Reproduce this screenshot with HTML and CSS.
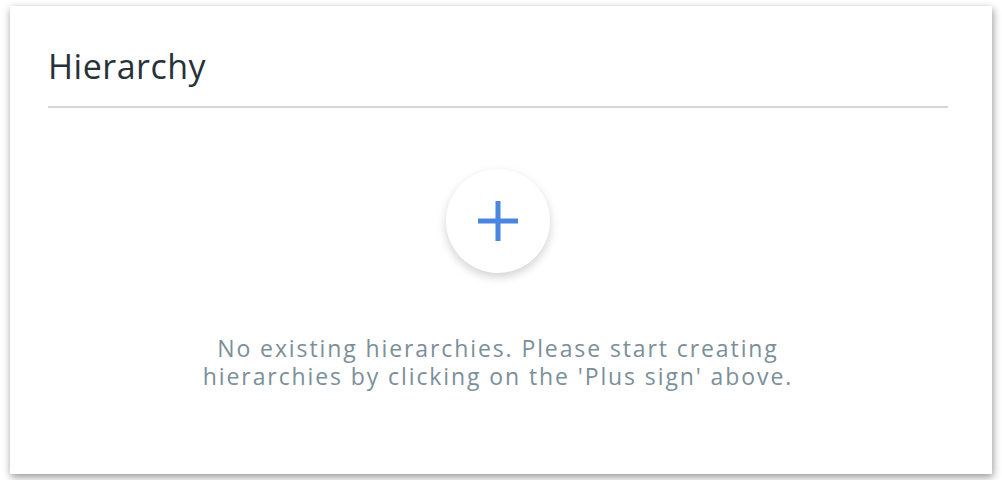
FILE: index.html
```
<!DOCTYPE html>
<html lang="en">

<head>
    <meta charset="UTF-8">
    <meta name="viewport" content="width=device-width, initial-scale=1.0">
    <title>Hierarchy</title>
    <link rel="stylesheet" href="styles.css">
</head>

<body>
    <div class="card">
        <div class="card-header">
            <h2 class="title">Hierarchy</h2>
        </div>
        <div class="empty-state">
            <button type="button" class="add-btn" aria-label="Add hierarchy">
                <svg width="40" height="40" viewBox="0 0 40 40">
                    <rect x="17.5" y="0" width="5" height="40" fill="#4a86e0" />
                    <rect x="0" y="17.5" width="40" height="5" fill="#4a86e0" />
                </svg>
            </button>
            <p class="empty-text">No existing hierarchies. Please start creating<br>hierarchies by clicking on the 'Plus sign' above.</p>
        </div>
    </div>
</body>

</html>
```

FILE: styles.css
```
/* 全局样式 */
body {
    font-family: 'Open Sans', 'Noto Sans', sans-serif;
    background-color: #fff;
    margin: 0;
    padding: 6px 10px;
}

/* 卡片 */
.card {
    height: 468px;
    box-sizing: border-box;
    padding: 0 44px 0 38px;
    background-color: #fff;
    box-shadow: 1px 3px 8px rgba(0, 0, 0, 0.42);
}

.card-header {
    padding-top: 36px;
    border-bottom: 2px solid #d6d6d6;
}

.title {
    margin: 0;
    padding-bottom: 16px;
    font-size: 34px;
    line-height: 48px;
    font-weight: 400;
    letter-spacing: 0.5px;
    color: #263238;
}

/* 空状态 */
.empty-state {
    display: flex;
    flex-direction: column;
    align-items: center;
    padding-top: 61px;
}

.add-btn {
    width: 104px;
    height: 104px;
    border: none;
    border-radius: 50%;
    background-color: #fff;
    box-shadow: 0 4px 10px rgba(0, 0, 0, 0.18);
    display: flex;
    align-items: center;
    justify-content: center;
    padding: 0;
    cursor: pointer;
}

.empty-text {
    margin: 61px 0 0;
    font-size: 23px;
    line-height: 28px;
    letter-spacing: 1.9px;
    color: #7b8f99;
    text-align: center;
}
```
